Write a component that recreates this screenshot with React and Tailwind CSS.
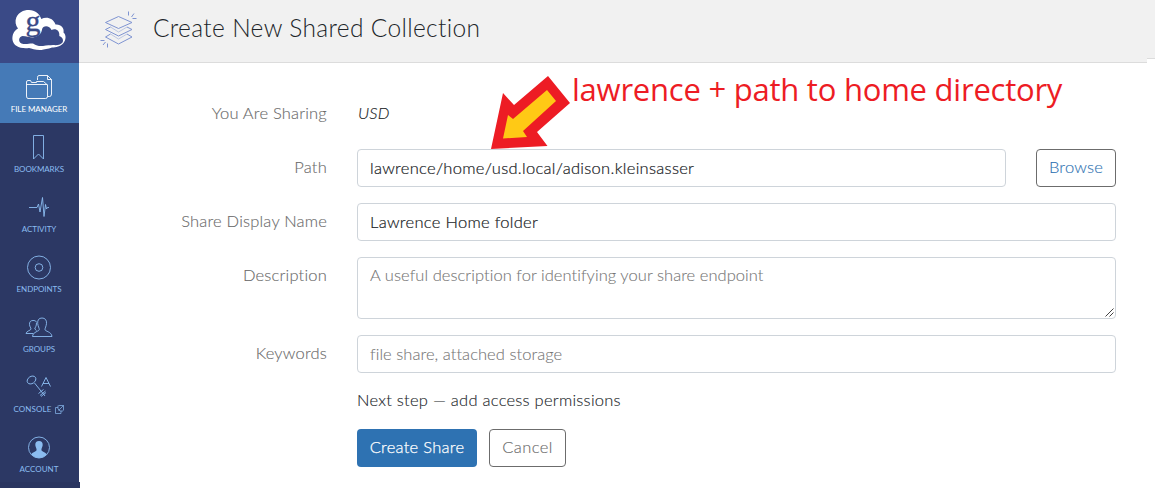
const nav = [
  { label: 'FILE MANAGER', icon: FolderIcon, active: true, cls: 'tracking-[-0.05px]' },
  { label: 'BOOKMARKS', icon: BookmarkIcon, cls: 'tracking-[-0.1px]' },
  { label: 'ACTIVITY', icon: ActivityIcon, cls: 'tracking-[-0.05px]' },
  { label: 'ENDPOINTS', icon: EndpointIcon, cls: 'tracking-[-0.05px]' },
  { label: 'GROUPS', icon: GroupsIcon, cls: 'tracking-[0px]' },
  { label: 'CONSOLE', icon: ConsoleIcon, external: true, cls: 'tracking-[0.1px]' },
  { label: 'ACCOUNT', icon: AccountIcon, cls: 'tracking-[0px]' },
];

function Icon({ children }) {
  return (
    <svg width="40" height="30" viewBox="0 0 40 30" fill="none" stroke="currentColor" strokeWidth=".9" className="block">
      {children}
    </svg>
  );
}

function FolderIcon() {
  return (
    <Icon>
      <path d="M18.500 7V4.500Q18.500 2.500 20 2.500H28.500L32.500 6.500V21Q32.500 23.500 30.500 23.500H28.500M28.500 2.500V6.500H32.500" />
      <path d="M7.500 23V9Q7.500 7.500 9 7.500H11.500L12.500 9.500H17.500V8.500H24.500L28.500 12V23.500Q28.500 25.500 26.500 25.500H9Q7.500 25.500 7.500 23ZM7.500 11.500H28.500" />
    </Icon>
  );
}

function BookmarkIcon() {
  return (
    <Icon>
      <path d="M14.500 2.500H24.500V26L19.500 21L14.500 26Z" />
    </Icon>
  );
}

function ActivityIcon() {
  return (
    <Icon>
      <path d="M10 14.500H18L19.500 11L21 19L23.500 4.500L25 23.500L26.500 11.500L27.500 16L28.500 14.500H30" />
    </Icon>
  );
}

function EndpointIcon() {
  return (
    <Icon>
      <circle cx="20" cy="14.500" r="11.500" />
      <circle cx="20" cy="14.500" r="3.800" />
    </Icon>
  );
}

function GroupsIcon() {
  return (
    <Icon>
      <path d="M23 5C20 5 18.300 7 18.700 10.500C19 13.500 20.300 15 20.300 16.500C20.300 18.500 14 18.500 13.500 23.500H33C32.500 18.500 26 18.500 26 16.500C26 15 27.200 13.500 27.500 10.500C27.800 7 26 5 23 5Z" />
      <path d="M17.500 9C16.500 7.600 15.500 7.500 14 7.500C11.500 7.500 10.300 9 10.500 11.500C10.700 14 12 14.500 12 16C12 17.500 7.800 17.500 7 20.500H14.500M17.500 9.500C17.700 13.500 15.800 14.500 15.800 16L17.500 17.500" />
    </Icon>
  );
}

function ConsoleIcon() {
  return (
    <Icon>
      <ellipse cx="12.500" cy="7" rx="4.700" ry="3.500" transform="rotate(-35 12.500 7)" />
      <path d="M15.500 10L26 23M19.500 20.500L24.500 16.500M21 22.500L26.500 18M22 23.500L27 19.500M22.500 13.500L27 4.500L31.500 13.500M24 10.500H30" />
    </Icon>
  );
}

function AccountIcon() {
  return (
    <Icon>
      <circle cx="20" cy="14.500" r="10.500" />
      <path fill="currentColor" stroke="none" d="M20 8C17.500 8 16.200 9.500 16.300 12C16.400 14 17.600 15 17.600 17C17.600 18.700 13 19 12.300 21.500C16 26 24 26 27.700 21.500C27 19 22.400 18.700 22.400 17C22.400 15 23.600 14 23.700 12C23.800 9.500 22.500 8 20 8Z" />
    </Icon>
  );
}

function CloudLogo() {
  return (
    <svg width="56" height="52" viewBox="0 -10 56 52" className="block">
      <path
        fill="#fff"
        fillRule="evenodd"
        d="M17 0C23 0 27.500 3.500 29.300 9C34 6.500 41 7.500 43.500 14.500C49 14 52.500 18 51.500 22.500C54.500 25 54 30 51.500 33C48.500 36.500 44 37.500 40 37.500C36 39 32 39 29.500 40C24 40.500 20 38.500 17 38C8 39 1.500 36 .5 30C0 25.500 1.500 21 6 18.500C3.500 15.500 2.800 11 4.300 7.500C6.500 2.500 11 0 17 0ZM10.500 26C6.500 27 6 31.500 9.500 33.500C14 35 18 33 21 33.500C25 36.500 28 36 31 36C35 35 38 35.500 41 35C46 35.500 49 34.500 50.500 32.500C52 29.500 50 27 47.300 26C48 21 44 18 39.500 20C38 15.500 31 14.500 30 19.500C29.500 24 26 26.500 21 27.500C18 27.500 14 26 10.500 26Z"
      />
      <text x="13.500" y="21" fontSize="30" fontFamily="Liberation Serif, serif" fill="#3a4a87" stroke="#3a4a87" strokeWidth=".3">g</text>
    </svg>
  );
}

function LayersIcon() {
  return (
    <svg width="40" height="40" viewBox="0 0 40 40" fill="none" stroke="#7f94d2" strokeWidth="1" className="block">
      <path d="M18.500 6.500L32 12.500L18.500 18.500L5.500 12.500ZM10.500 17L5.500 19.500L18.500 26L32 19.500L27 17M10.500 24L5.500 27L18.500 34L32 27L27 24" />
      <path d="M10.500 17L18.500 22M27 17L18.500 22M10.500 24L18.500 29M27 24L18.500 29" opacity=".45" />
      <path d="M28.500 1.500V5.500M31.500 7L34 3.500M32.500 8.500H36.500M.5 30.500H4.500M3 35L5.500 32M7.500 33.500V37.500" />
    </svg>
  );
}

function Field({ label, children }) {
  return (
    <div className="flex">
      <div className="mr-[30px] w-[248px] self-start text-right leading-6 tracking-[0.2px] text-[#6a6a6a] [-webkit-text-stroke:0.12px_#6a6a6a]">
        {label}
      </div>
      {children}
    </div>
  );
}

const box = 'rounded border border-[#ced4da] bg-white px-3 -mt-[6px]';
const entered = ' h-[38px] leading-9 tracking-[0.3px] text-[#15181b] [-webkit-text-stroke:0.2px_#212529]';
const hint = 'tracking-[0.05px] text-[#757575] [-webkit-text-stroke:0.1px_#757575]';

export default function App() {
  return (
    <div className="relative flex h-[488px] w-[1155px] overflow-hidden bg-white font-['Lato',sans-serif] text-[16.5px] font-light text-[#212529]">
      <aside className="flex w-[79px] shrink-0 flex-col bg-[#2c3864]">
        <div className="h-[63px] bg-[#3a4a87] pl-3">
          <CloudLogo />
        </div>
        {nav.map(({ label, icon: NavIcon, active, external, cls }) => (
          <div
            key={label}
            className={
              'flex h-[60px] flex-col items-center pt-[10px] pr-px text-[8px] leading-3 font-normal ' +
              (active ? 'bg-[#457ab7] text-white' : 'text-[#8bbcf0]')
            }
          >
            <NavIcon />
            <div className={'flex items-center whitespace-nowrap ' + cls}>
              {label}
              {external && (
                <svg width="9" height="9" viewBox="0 0 9 9" fill="none" stroke="currentColor" strokeWidth=".7" className="ml-1">
                  <path d="M3 2.500H.5V8.500H6V6M3.500.5H8.500V5.500M3.500 5.500L8.500.5M3 .5V4L5 6H8" />
                </svg>
              )}
            </div>
          </div>
        ))}
        <div className="-mt-px h-[6px] w-20 bg-[#2a3560]" />
      </aside>

      <div className="flex grow flex-col">
        <header className="flex h-[63px]">
          <div className="flex w-[1068px] items-start border-b border-[#dcdcdc] bg-[#f1f1f1] pt-[10px] pl-[21px]">
            <LayersIcon />
            <h1 className="ml-[13px] text-[24.500px] leading-9 tracking-[0.35px]">Create New Shared Collection</h1>
          </div>
          <div className="h-[59px] w-2 border-b border-[#dcdcdc] bg-[#f1f1f1]" />
        </header>

        <main className="flex flex-col">
          <div className="mt-[38px]">
            <Field label="You Are Sharing">
              <span className="ml-px leading-6 tracking-[0.2px] italic [-webkit-text-stroke:0.15px_#212529]">USD</span>
            </Field>
          </div>
          <div className="mt-[30px] flex flex-col gap-[22px]">
            <Field label="Path">
              <div className={box + entered + ' w-[649px]'}>lawrence/home/usd.local/adison.kleinsasser</div>
              <button className="-mt-[6px] ml-[30px] h-[38px] w-20 rounded border border-[#6c6c6c] pb-px tracking-[0.2px] text-[#2e72b2] [-webkit-text-stroke:0.12px_#2e72b2]">
                Browse
              </button>
            </Field>
            <Field label="Share Display Name">
              <div className={box + entered + ' w-[759px]'}>Lawrence Home folder</div>
            </Field>
            <Field label="Description">
              <div className={box + ' flex h-[62px] w-[759px] items-end justify-between pr-px pb-px'}>
                <span className={'self-start leading-[35px] ' + hint}>
                  A useful description for identifying your share endpoint
                </span>
                <svg width="9" height="9" viewBox="0 0 9 9" stroke="#444" strokeWidth="1" className="block">
                  <path d="M.5 8.500L8.500 .5M4.500 8.500L8.500 4.500" />
                </svg>
              </div>
            </Field>
            <Field label="Keywords">
              <div className={box + ' h-[38px] w-[759px] leading-9 ' + hint}>file share, attached storage</div>
            </Field>
          </div>
          <div className="mt-[15px] pl-[278px] leading-6 tracking-[0.25px] [-webkit-text-stroke:0.12px_#212529]">
            Next step — add access permissions
          </div>
          <div className="mt-[17px] flex gap-3 pl-[278px]">
            <button className="h-[38px] w-[120px] rounded bg-[#2e72b2] pb-[2px] tracking-[0.28px] text-white [-webkit-text-stroke:0.25px_white]">
              Create Share
            </button>
            <button className="h-[38px] w-[77px] rounded border border-[#6c6c6c] pb-[2px] tracking-[0.4px] text-[#6a6a6a] [-webkit-text-stroke:0.12px_#6a6a6a]">
              Cancel
            </button>
          </div>
        </main>
      </div>

      <svg width="82" height="76" viewBox="0 0 82 76" className="absolute top-[75px] left-[490px]">
        <path fill="#ed1c24" d="M58 1L80 28L47 57L57.500 71L1 74L13 18L24 30Z" />
        <path fill="#ffc915" d="M57 15L66 26L33 56L37 62L13 63.500L18 40L23 44Z" />
      </svg>
      <div className="absolute top-[68px] left-[572px] font-['Open_Sans',sans-serif] text-[31px] leading-[42px] font-normal tracking-[-0.23px] whitespace-nowrap text-[#ed1c24]">
        lawrence + path to home directory
      </div>
    </div>
  );
}
